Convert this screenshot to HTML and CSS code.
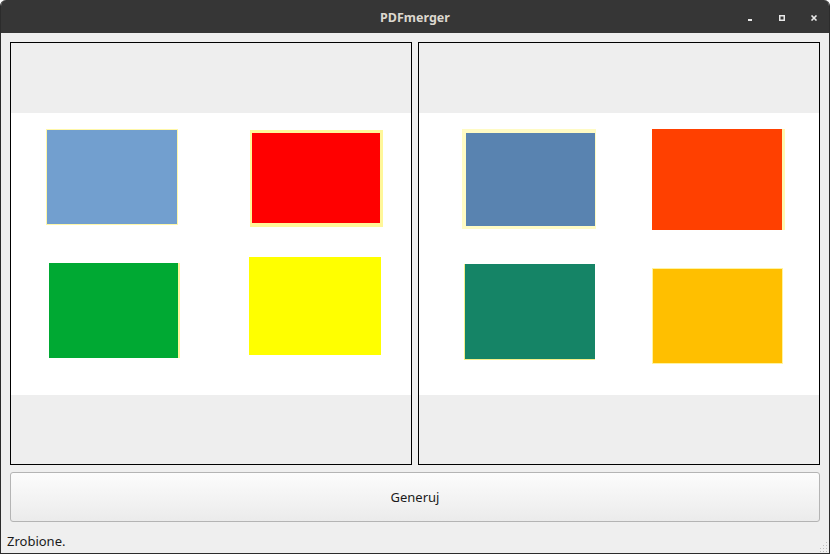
FILE: index.html
```html
<!DOCTYPE html>
<html lang="pl">
<head>
<meta charset="utf-8">
<title>PDFmerger</title>
<link rel="stylesheet" href="styles.css">
</head>
<body>
<div class="window">
  <div class="titlebar">
    <div class="tb-side"></div>
    <div class="title">PDFmerger</div>
    <div class="tb-buttons">
      <svg class="wbtn" width="16" height="6" viewBox="0 0 16 6"><rect x="6" y="4" width="4" height="2" fill="#e8e8e8"/></svg>
      <svg class="wbtn" width="16" height="6" viewBox="0 0 16 6"><rect x="5.75" y="0.75" width="4.5" height="4.5" fill="none" stroke="#e8e8e8" stroke-width="1.5"/></svg>
      <svg class="wbtn" width="16" height="6" viewBox="0 0 16 6"><path d="M5.5 0.5 L10.5 5.5 M10.5 0.5 L5.5 5.5" stroke="#e8e8e8" stroke-width="1.6"/></svg>
    </div>
  </div>
  <div class="content">
    <div class="panels">
      <div class="panel">
        <div class="page">
          <svg width="400" height="282" viewBox="0 0 400 282" shape-rendering="crispEdges">
            <rect x="35" y="16" width="132" height="96" fill="#fff7a8"/>
            <rect x="36" y="17" width="130" height="94" fill="#729fcf"/>
            <rect x="239" y="17" width="133" height="97" fill="#fff79a"/>
            <rect x="241" y="20" width="128" height="90" fill="#ff0000"/>
            <rect x="38" y="150" width="131" height="95" fill="#fff59a"/>
            <rect x="38" y="150" width="129" height="95" fill="#00a933"/>
            <rect x="238" y="144" width="132" height="98" fill="#ffff00"/>
          </svg>
        </div>
      </div>
      <div class="panel">
        <div class="page">
          <svg width="400" height="282" viewBox="0 0 400 282" shape-rendering="crispEdges">
            <rect x="43" y="16" width="134" height="100" fill="#fffbc4"/>
            <rect x="47" y="20" width="129" height="93" fill="#5983b0"/>
            <rect x="233" y="16" width="133" height="101" fill="#fff8b0"/>
            <rect x="233" y="16" width="130" height="101" fill="#ff4000"/>
            <rect x="45" y="151" width="131" height="96" fill="#f4f08a"/>
            <rect x="46" y="151" width="130" height="95" fill="#158466"/>
            <rect x="233" y="155" width="131" height="96" fill="#fff3a0"/>
            <rect x="234" y="156" width="129" height="94" fill="#ffbf00"/>
          </svg>
        </div>
      </div>
    </div>
    <button class="generate">Generuj</button>
  </div>
  <div class="status">
    <span class="status-text">Zrobione.</span>
    <svg class="grip" width="10" height="10" viewBox="0 0 10 10">
      <g fill="#bdbdbd">
        <rect x="8" y="0" width="1" height="1"/>
        <rect x="5" y="3" width="1" height="1"/><rect x="8" y="3" width="1" height="1"/>
        <rect x="2" y="6" width="1" height="1"/><rect x="5" y="6" width="1" height="1"/><rect x="8" y="6" width="1" height="1"/>
        <rect x="2" y="9" width="1" height="1"/><rect x="5" y="9" width="1" height="1"/><rect x="8" y="9" width="1" height="1"/>
      </g>
    </svg>
  </div>
</div>
</body>
</html>
```
FILE: styles.css
```css
html, body {
  margin: 0;
  padding: 0;
  background: #ffffff;
}

body {
  width: 830px;
  height: 554px;
  overflow: hidden;
  font-family: "Noto Sans", "DejaVu Sans", sans-serif;
}

.window {
  box-sizing: border-box;
  width: 830px;
  height: 554px;
  display: flex;
  flex-direction: column;
  background: #efefef;
  border: 1px solid #2c2c2c;
  border-top: none;
  border-radius: 6px 6px 0 0;
  overflow: hidden;
}

.titlebar {
  height: 33px;
  flex: none;
  background: #363636;
  display: grid;
  grid-template-columns: 1fr auto 1fr;
  align-items: center;
}

.title {
  color: #dcd8cf;
  font-size: 12.5px;
  font-weight: bold;
  line-height: 33px;
  padding-top: 1px;
}

.tb-buttons {
  display: flex;
  justify-content: flex-end;
  align-items: center;
  gap: 16px;
  padding-right: 7px;
  padding-top: 2px;
}

.wbtn {
  display: block;
}

.content {
  padding: 9px 9px 0 9px;
  display: flex;
  flex-direction: column;
  gap: 7px;
}

.panels {
  display: flex;
  gap: 6px;
  height: 423px;
}

.panel {
  box-sizing: border-box;
  width: 402px;
  height: 423px;
  border: 1px solid #000000;
  background: #eeeeee;
  padding-top: 70px;
}

.page {
  width: 400px;
  height: 282px;
  background: #ffffff;
}

.page svg {
  display: block;
}

.generate {
  box-sizing: border-box;
  width: 810px;
  height: 50px;
  margin: 0;
  padding: 0;
  border: 1px solid #b4b4b4;
  border-radius: 3px;
  background: linear-gradient(to bottom, #fcfcfc 0%, #f2f2f2 60%, #ebebeb 100%);
  font-family: "Noto Sans", "DejaVu Sans", sans-serif;
  font-size: 13px;
  color: #1a1a1a;
}

.status {
  flex: 1;
  display: flex;
  align-items: flex-end;
  justify-content: space-between;
  padding: 0 1px 1px 6px;
}

.status-text {
  font-size: 13px;
  color: #1a1a1a;
  line-height: 16px;
  padding-bottom: 3px;
}

.grip {
  display: block;
}
```
